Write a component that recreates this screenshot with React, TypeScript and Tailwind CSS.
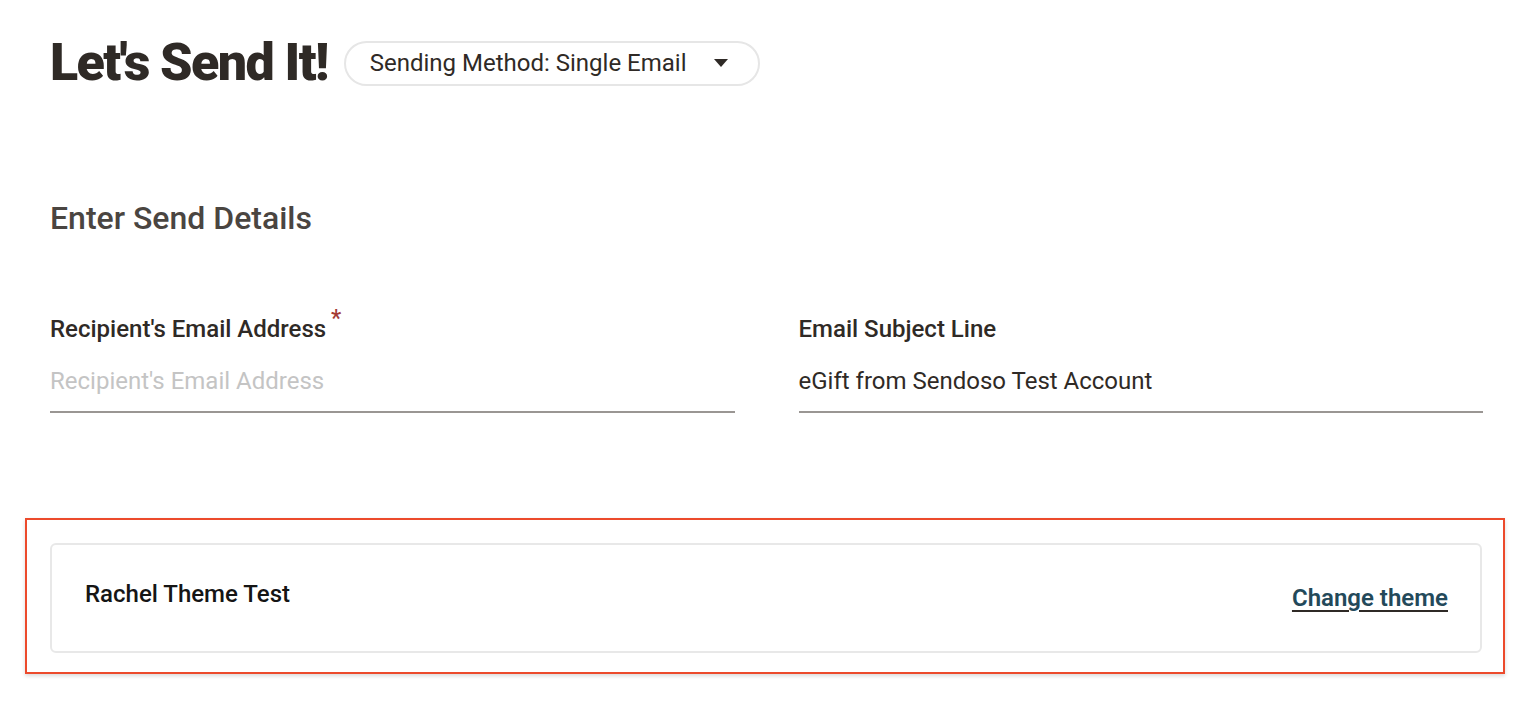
const FIELDS = [
  { label: "Recipient's Email Address", required: true, value: "", placeholder: "Recipient's Email Address" },
  { label: "Email Subject Line", required: false, value: "eGift from Sendoso Test Account", placeholder: "" },
];

export default function App() {
  return (
    <div className="min-h-screen bg-white pl-[50px] pr-[55px] pt-[37px] font-['Roboto','Liberation_Sans',sans-serif] text-[#2f2a26]">
      <div className="flex items-center gap-[16px]">
        <h1 className="text-[52px] font-black leading-none tracking-[-1.6px] text-[#2f2a26]">Let's Send It!</h1>
        <button className="flex h-[45px] w-[416px] items-center justify-between rounded-full border-2 border-[#e6e6e6] pl-[24px] pr-[30px] text-[24px] text-[#2f2a26]">
          <span>Sending Method: Single Email</span>
          <span className="h-0 w-0 border-x-[7px] border-t-[8px] border-x-transparent border-t-[#2f2a26]" />
        </button>
      </div>

      <h2 className="mt-[113px] text-[32px] font-medium leading-none text-[#4a4541]">Enter Send Details</h2>

      <div className="mt-[83px] grid grid-cols-2 gap-[64px]">
        {FIELDS.map((f) => (
          <div key={f.label}>
            <div className="relative inline-block text-[24px] font-medium leading-none text-[#2f2a26]">
              {f.label}
              {f.required && <span className="absolute -right-[15px] -top-[10px] text-[23px] text-[#a33a35]">*</span>}
            </div>
            <div className="mt-[25px] border-b-2 border-[#9a9693] pb-[18px] text-[24px] leading-none">
              {f.value ? (
                <span className="text-[#2f2a26]">{f.value}</span>
              ) : (
                <span className="text-[#c4c4c4]">{f.placeholder}</span>
              )}
            </div>
          </div>
        ))}
      </div>

      <div className="-ml-[25px] -mr-[22px] mt-[105px] border-2 border-[#ec4a2c] pl-[23px] pr-[21px] pt-[23px] pb-[19px] shadow-[0_2px_4px_rgba(0,0,0,0.15)]">
        <div className="flex h-[110px] items-center justify-between rounded-[6px] border-2 border-[#e8e8e8] pl-[33px] pr-[32px]">
          <span className="-mt-[9px] text-[24px] font-medium text-[#151515]">Rachel Theme Test</span>
          <a className="text-[24px] font-semibold text-[#23495a] underline decoration-[#2f2a26] underline-offset-[4px]">Change theme</a>
        </div>
      </div>
    </div>
  );
}
